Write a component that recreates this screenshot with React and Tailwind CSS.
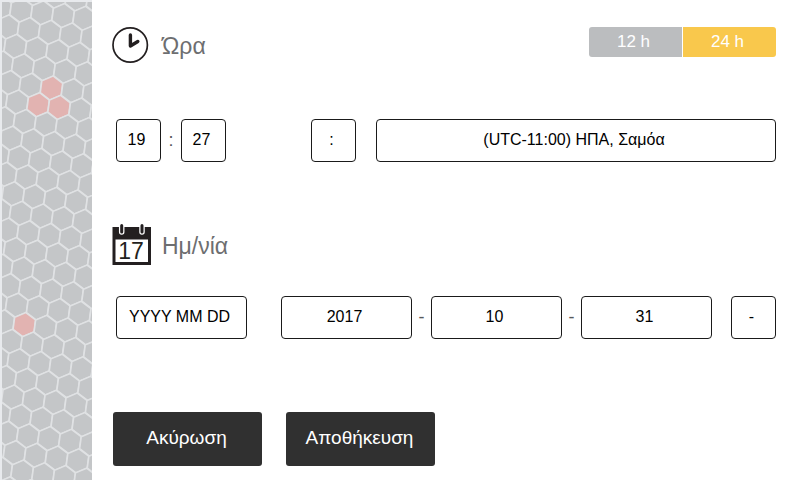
import { useState } from 'react'
import clsx from 'clsx'

// Honeycomb lattice: origin cell and the two steps between neighbours
const ORIGIN = [49.5, 88]
const STEP_A = [21, 2.7]
const STEP_B = [7.6, 19.45]
const HIGHLIGHTED = ['0,0', '0,1', '-1,1', '-6,13']

const CELL = Array.from({ length: 6 }, (_, i) => {
  const angle = ((37.3 + i * 60) * Math.PI) / 180
  return [12.1 * Math.cos(angle), 12.1 * Math.sin(angle)]
})

const buildCells = () => {
  const cells = []
  for (let m = -6; m < 60; m++) {
    for (let n = -30; n < 8; n++) {
      const x = ORIGIN[0] + n * STEP_A[0] + m * STEP_B[0]
      const y = ORIGIN[1] + n * STEP_A[1] + m * STEP_B[1]
      if (x < -14 || x > 104) continue
      const key = `${n},${m}`
      cells.push({
        key,
        active: HIGHLIGHTED.includes(key),
        points: CELL.map(([cx, cy]) => `${(x + cx).toFixed(1)},${(y + cy).toFixed(1)}`).join(' '),
      })
    }
  }
  return cells
}

const cells = buildCells()

const Honeycomb = () => (
  <div className="flex w-[92px] shrink-0 border-l-2 border-t-2 border-[#e8eaed] bg-[#c4c6c8] overflow-hidden">
    <svg className="w-full h-auto min-h-0" viewBox="0 2 90 478" preserveAspectRatio="xMinYMin slice" aria-hidden="true">
      {cells.map((cell) => (
        <polygon
          key={cell.key}
          points={cell.points}
          fill={cell.active ? '#e2b3b1' : '#c4c6c8'}
          stroke="#e0e2e4"
          strokeWidth="1.5"
        />
      ))}
    </svg>
  </div>
)

const ClockIcon = () => (
  <svg width="40" height="38" viewBox="0 0 40 38" fill="none" stroke="#231f20" aria-hidden="true">
    <circle cx="18.2" cy="19" r="17.2" strokeWidth="1.7" />
    <path d="M18.4 9V20L25.8 15.5" strokeWidth="3.4" strokeLinecap="round" strokeLinejoin="round" />
  </svg>
)

const CalendarIcon = () => (
  <svg width="40" height="41" viewBox="0 0 40 41" aria-hidden="true">
    <path d="M0.5 3H39V41H0.5Z" fill="#231f20" />
    <path d="M3.5 15.5H36V38H3.5Z" fill="#fff" />
    <path d="M9.7 1V8M30 1V8" stroke="#fff" strokeWidth="5.5" strokeLinecap="round" />
    <path d="M9.7 1.5V8M30 1.5V8" stroke="#231f20" strokeWidth="3" strokeLinecap="round" />
    <text x="19" y="35" textAnchor="middle" fontSize="23" fill="#231f20" className="font-['Liberation_Sans',sans-serif]">
      17
    </text>
  </svg>
)

const boxClass =
  'h-[43px] min-w-0 rounded border border-[#1a1a1a] bg-white pr-1 pb-[2px] text-center text-base text-black'

const Box = ({ label, value, className }) => (
  <input type="text" aria-label={label} defaultValue={value} className={clsx(boxClass, className)} />
)

const Separator = ({ className, children }) => (
  <span className={clsx('shrink-0 pb-[2px] text-center text-lg text-[#58595b]', className)}>{children}</span>
)

const SectionTitle = ({ icon, children }) => (
  <div className="flex items-center gap-[10px]">
    {icon}
    <h2 className="pt-[2px] text-[23px] leading-8 text-[#6d6e70]">{children}</h2>
  </div>
)

const ActionButton = ({ children }) => (
  <button
    type="button"
    className="h-[54px] w-[149px] rounded-[3px] bg-[#303030] pr-[2px] pb-[2px] text-[19px] text-white"
  >
    {children}
  </button>
)

const App = () => {
  const [format, setFormat] = useState('24')

  return (
    <div className="flex min-h-screen bg-white font-['Liberation_Sans',sans-serif]">
      <Honeycomb />

      <main className="flex-1 min-w-0 pt-[26px] pr-6 pb-3 pl-5">
        <div className="flex items-start justify-between">
          <SectionTitle icon={<ClockIcon />}>Ώρα</SectionTitle>
          <div className="mt-px flex h-[30px] gap-px overflow-hidden rounded-[3px] text-[17px] text-white">
            <button
              type="button"
              aria-pressed={format === '12'}
              onClick={() => setFormat('12')}
              className={clsx('w-[93px] pr-1', format === '12' ? 'bg-[#f9c84c]' : 'bg-[#bbbdbf]')}
            >
              12 h
            </button>
            <button
              type="button"
              aria-pressed={format === '24'}
              onClick={() => setFormat('24')}
              className={clsx('w-[93px] pr-1', format === '24' ? 'bg-[#f9c84c]' : 'bg-[#bbbdbf]')}
            >
              24 h
            </button>
          </div>
        </div>

        <div className="mt-[55px] flex items-center pl-1">
          <Box label="Ώρες" value="19" className="w-[45px]" />
          <Separator className="w-5">:</Separator>
          <Box label="Λεπτά" value="27" className="w-[45px]" />
          <Box label="Διαχωριστικό ώρας" value=":" className="ml-[85px] w-[45px]" />
          <button type="button" aria-haspopup="listbox" className={clsx(boxClass, 'ml-5 flex-1')}>
            (UTC-11:00) ΗΠΑ, Σαμόα
          </button>
        </div>

        <div className="mt-[62px]">
          <SectionTitle icon={<CalendarIcon />}>Ημ/νία</SectionTitle>
        </div>

        <div className="mt-[31px] flex items-center pl-1">
          <button type="button" aria-haspopup="listbox" className={clsx(boxClass, 'mr-[34px] flex-1')}>
            YYYY MM DD
          </button>
          <Box label="Έτος" value="2017" className="flex-1" />
          <Separator className="w-[19px]">-</Separator>
          <Box label="Μήνας" value="10" className="flex-1" />
          <Separator className="w-[19px]">-</Separator>
          <Box label="Ημέρα" value="31" className="flex-1" />
          <Box label="Διαχωριστικό ημερομηνίας" value="-" className="ml-[19px] w-[45px]" />
        </div>

        <div className="mt-[73px] flex gap-6 pl-px">
          <ActionButton>Ακύρωση</ActionButton>
          <ActionButton>Αποθήκευση</ActionButton>
        </div>
      </main>
    </div>
  )
}

export default App
